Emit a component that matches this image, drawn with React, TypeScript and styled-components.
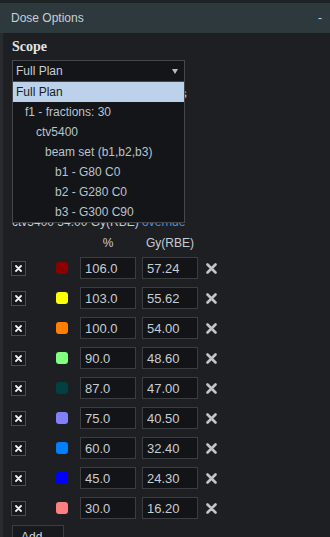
import React from 'react';
import styled, { createGlobalStyle } from 'styled-components';

const GlobalStyle = createGlobalStyle`
  html, body {
    margin: 0;
    padding: 0;
    background: #1e1f22;
  }
  body {
    font-family: "Liberation Sans", Arial, sans-serif;
    font-size: 12px;
    color: #c6ccd1;
  }
`;

type Level = { x: string; pct: string; gy: string; color: string };

const levels: Level[] = [
  { x: '106', pct: '106.0', gy: '57.24', color: '#8b0000' },
  { x: '103', pct: '103.0', gy: '55.62', color: '#ffff00' },
  { x: '100', pct: '100.0', gy: '54.00', color: '#ff8000' },
  { x: '90', pct: '90.0', gy: '48.60', color: '#80ff80' },
  { x: '87', pct: '87.0', gy: '47.00', color: '#004040' },
  { x: '75', pct: '75.0', gy: '40.50', color: '#8080ff' },
  { x: '60', pct: '60.0', gy: '32.40', color: '#0080ff' },
  { x: '45', pct: '45.0', gy: '24.30', color: '#0000ff' },
  { x: '30', pct: '30.0', gy: '16.20', color: '#ff8080' },
];

const scopes = [
  { label: 'Full Plan', indent: 0 },
  { label: 'f1 - fractions: 30', indent: 9 },
  { label: 'ctv5400', indent: 20 },
  { label: 'beam set (b1,b2,b3)', indent: 29 },
  { label: 'b1 - G80 C0', indent: 39 },
  { label: 'b2 - G280 C0', indent: 39 },
  { label: 'b3 - G300 C90', indent: 39 },
];

const Page = styled.div`
  height: 537px;
  overflow: hidden;
  border-top: 3px solid #1d2225;
  box-sizing: border-box;
`;

const Header = styled.div`
  height: 30px;
  background: #2e393e;
  display: flex;
  align-items: center;
  justify-content: space-between;
  padding: 0 8px 0 11px;
  color: #c8d0d5;
  font-size: 12px;
`;

const Body = styled.div`
  border-left: 3px solid #2a2b2e;
  padding: 6px 0 0 9px;
`;

const Heading = styled.div`
  font-family: "Liberation Serif", "Times New Roman", serif;
  font-weight: bold;
  font-size: 14px;
  line-height: 16px;
  color: #e2e4e6;
`;

const SelectWrap = styled.div`
  position: relative;
  width: 173px;
  margin-top: 5px;
`;

const SelectBox = styled.div`
  height: 20px;
  border: 1px solid #47484b;
  background: #141518;
  display: flex;
  align-items: center;
  justify-content: space-between;
  padding: 0 6px 0 3px;
  font-size: 12px;
  color: #c9ced3;
`;

const Arrow = styled.span`
  width: 0;
  height: 0;
  border-left: 3.5px solid transparent;
  border-right: 3.5px solid transparent;
  border-top: 5px solid #b9bcbf;
`;

// open dropdown list, drawn over the options below the select
const Menu = styled.div`
  position: absolute;
  top: 100%;
  left: 0;
  right: 0;
  z-index: 2;
  background: #141518;
  border: 1px solid #45474a;
  border-top: none;
`;

const MenuItem = styled.div<{ $indent: number; $active?: boolean }>`
  height: 20px;
  line-height: 20px;
  padding-left: ${(p) => 3 + p.$indent}px;
  font-size: 12px;
  white-space: nowrap;
  background: ${(p) => (p.$active ? '#bcd2ea' : 'transparent')};
  color: ${(p) => (p.$active ? '#1a1c20' : '#b9c4cc')};
`;

const HiddenOptions = styled.div`
  height: 133px;
  padding-top: 4px;
  box-sizing: border-box;
  display: flex;
  flex-direction: column;
  overflow: hidden;
`;

const OptionText = styled.div<{ $gap?: number }>`
  line-height: 16px;
  margin-top: ${(p) => p.$gap || 0}px;
  white-space: nowrap;
`;

const OptionRow = styled.div<{ $gap: number }>`
  display: flex;
  align-items: center;
  gap: 6px;
  height: 20px;
  margin-top: ${(p) => p.$gap}px;
`;

const Prescription = styled.div`
  line-height: 14px;
  white-space: nowrap;
`;

const Link = styled.span`
  color: #4d8fd8;
`;

const LevelGrid = styled.div`
  display: grid;
  grid-template-columns: 45px 24px 62px 64px 20px;
  margin-left: -1px;
  margin-top: 4px;
`;

const ColHead = styled.div`
  height: 20px;
  line-height: 20px;
  width: 56px;
  text-align: center;
  font-size: 12px;
  color: #c6ccd1;
`;

const Cell = styled.div`
  height: 30px;
  display: flex;
  align-items: center;
`;

const Check = styled.span`
  width: 15px;
  height: 15px;
  box-sizing: border-box;
  border: 1px solid #4a4c4f;
  background: #17181b;
  display: inline-flex;
  align-items: center;
  justify-content: center;
  flex: none;
`;

const Swatch = styled.span<{ $color: string }>`
  width: 12px;
  height: 12px;
  border-radius: 3px;
  background: ${(p) => p.$color};
`;

const NumInput = styled.input`
  width: 56px;
  height: 22px;
  box-sizing: border-box;
  border: 1px solid #3c3d40;
  background: #131417;
  color: #c8cdd2;
  font-family: "Liberation Sans", Arial, sans-serif;
  font-size: 13px;
  padding: 0 4px;
  outline: none;
`;

const AddButton = styled.button`
  margin-top: 2px;
  margin-left: 0;
  width: 52px;
  height: 24px;
  border: 1px solid #3c3d40;
  background: #18191c;
  color: #d4d8dc;
  font-family: "Liberation Sans", Arial, sans-serif;
  font-size: 12px;
  text-align: left;
  padding: 0 8px;
`;

const SmallX = () => (
  <svg width="7" height="7" viewBox="0 0 7 7">
    <path d="M1 1L6 6M6 1L1 6" stroke="#f0f0f0" strokeWidth="1.8" strokeLinecap="round" />
  </svg>
);

const DeleteX = () => (
  <svg width="11" height="11" viewBox="0 0 11 11">
    <path d="M1.5 1.5L9.5 9.5M9.5 1.5L1.5 9.5" stroke="#c2c4c6" strokeWidth="2.6" strokeLinecap="round" />
  </svg>
);

const App = () => (
  <Page>
    <GlobalStyle />
    <Header>
      <span>Dose Options</span>
      <span>-</span>
    </Header>
    <Body>
      <Heading>Scope</Heading>
      <SelectWrap>
        <SelectBox>
          <span>Full Plan</span>
          <Arrow />
        </SelectBox>
        <Menu>
          {scopes.map((s, i) => (
            <MenuItem key={s.label} $indent={s.indent} $active={i === 0}>
              {s.label}
            </MenuItem>
          ))}
        </Menu>
      </SelectWrap>
      <HiddenOptions>
        <OptionText>Isodoses relative to prescriptions</OptionText>
        <OptionRow $gap={20}>
          <Check><SmallX /></Check>
          <span>Show isodose lines</span>
        </OptionRow>
        <OptionRow $gap={18}>
          <Check />
          <span>Show color wash</span>
        </OptionRow>
        <OptionText $gap={10}>Prescription</OptionText>
      </HiddenOptions>
      <Prescription>
        ctv5400 54.00 Gy(RBE) <Link>override</Link>
      </Prescription>
      <LevelGrid>
        <div />
        <div />
        <ColHead>%</ColHead>
        <ColHead>Gy(RBE)</ColHead>
        <div />
        {levels.map((l) => (
          <React.Fragment key={l.x}>
            <Cell><Check><SmallX /></Check></Cell>
            <Cell><Swatch $color={l.color} /></Cell>
            <Cell><NumInput defaultValue={l.pct} /></Cell>
            <Cell><NumInput defaultValue={l.gy} /></Cell>
            <Cell><DeleteX /></Cell>
          </React.Fragment>
        ))}
      </LevelGrid>
      <AddButton>Add...</AddButton>
    </Body>
  </Page>
);

export default App;
